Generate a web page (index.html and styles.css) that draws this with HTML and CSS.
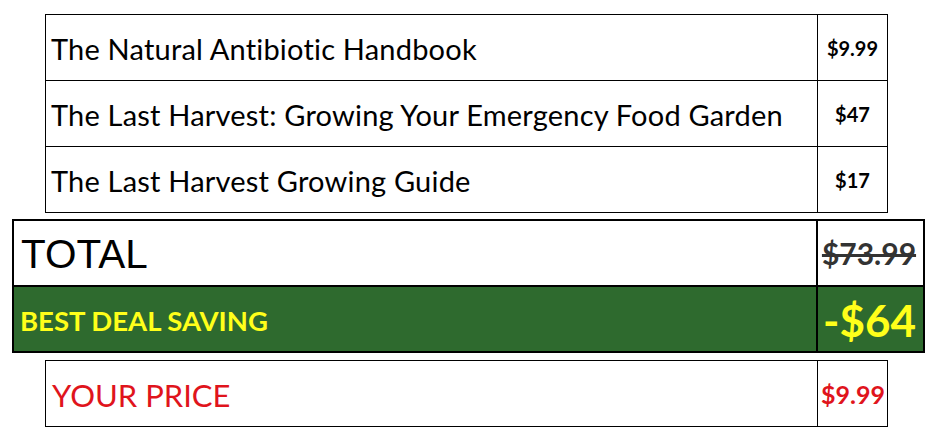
FILE: index.html
```html
<!DOCTYPE html>
<html lang="en">
<head>
<meta charset="utf-8">
<title>Order summary</title>
<link rel="stylesheet" href="styles.css">
</head>
<body>
<div class="page">
  <div class="items">
    <div class="row">
      <div class="name">The Natural Antibiotic Handbook</div>
      <div class="price">$9.99</div>
    </div>
    <div class="row">
      <div class="name">The Last Harvest: Growing Your Emergency Food Garden</div>
      <div class="price">$47</div>
    </div>
    <div class="row">
      <div class="name">The Last Harvest Growing Guide</div>
      <div class="price">$17</div>
    </div>
  </div>

  <div class="summary">
    <div class="srow total">
      <div class="sname">TOTAL</div>
      <div class="sprice"><s>$73.99</s></div>
    </div>
    <div class="srow saving">
      <div class="sname">BEST DEAL SAVING</div>
      <div class="sprice">-$64</div>
    </div>
  </div>

  <div class="final">
    <div class="row">
      <div class="name">YOUR PRICE</div>
      <div class="price">$9.99</div>
    </div>
  </div>
</div>
</body>
</html>
```

FILE: styles.css
```css
* { box-sizing: border-box; }
html, body { margin: 0; padding: 0; background: #fff; }
body {
  width: 936px;
  height: 443px;
  overflow: hidden;
  font-family: Lato, "Open Sans", sans-serif;
  color: #000;
}
.page {
  padding-top: 14px;
  display: flex;
  flex-direction: column;
}
.items, .final {
  margin-left: 45px;
  width: 843px;
  border: 1px solid #000;
}
.row {
  display: grid;
  grid-template-columns: 772px 69px;
  height: 66px;
  border-bottom: 1px solid #000;
}
.row:last-child { height: 65px; border-bottom: 0; }
.name {
  border-right: 1px solid #000;
  display: flex;
  align-items: center;
  padding: 2px 0 0 5px;
  font-size: 29px;
  letter-spacing: 0.2px;
  white-space: nowrap;
}
.price {
  display: flex;
  align-items: center;
  justify-content: center;
  font-weight: 700;
  font-size: 20px;
  padding-top: 1px;
}
.summary {
  margin-top: 6px;
  margin-left: 12px;
  width: 913px;
  border: 2px solid #000;
}
.srow {
  display: grid;
  grid-template-columns: 804px 105px;
  height: 66px;
  border-bottom: 2px solid #000;
}
.srow:last-child { height: 64px; border-bottom: 0; }
.sname {
  border-right: 2px solid #000;
  display: flex;
  align-items: center;
  white-space: nowrap;
}
.sprice {
  display: flex;
  align-items: center;
  justify-content: center;
  white-space: nowrap;
}
.total .sname {
  font-family: "Liberation Sans", Arial, sans-serif;
  font-size: 40.5px;
  padding-left: 7px;
  padding-top: 2px;
}
.total .sprice {
  font-size: 30px;
  font-weight: 700;
  color: #333;
  padding-right: 3px;
}
.saving { background: #2e6a2e; color: #ffff1a; font-weight: 700; }
.saving .sname { font-size: 27.5px; padding-left: 6px; padding-top: 2px; }
.saving .sprice { font-size: 44px; padding-top: 2px; padding-right: 2px; }
.final { margin-top: 7px; color: #e0141c; }
.final .name { font-size: 31px; padding-left: 6px; letter-spacing: 0; }
.final .price { font-size: 25px; justify-content: flex-start; padding-left: 3px; }
```
